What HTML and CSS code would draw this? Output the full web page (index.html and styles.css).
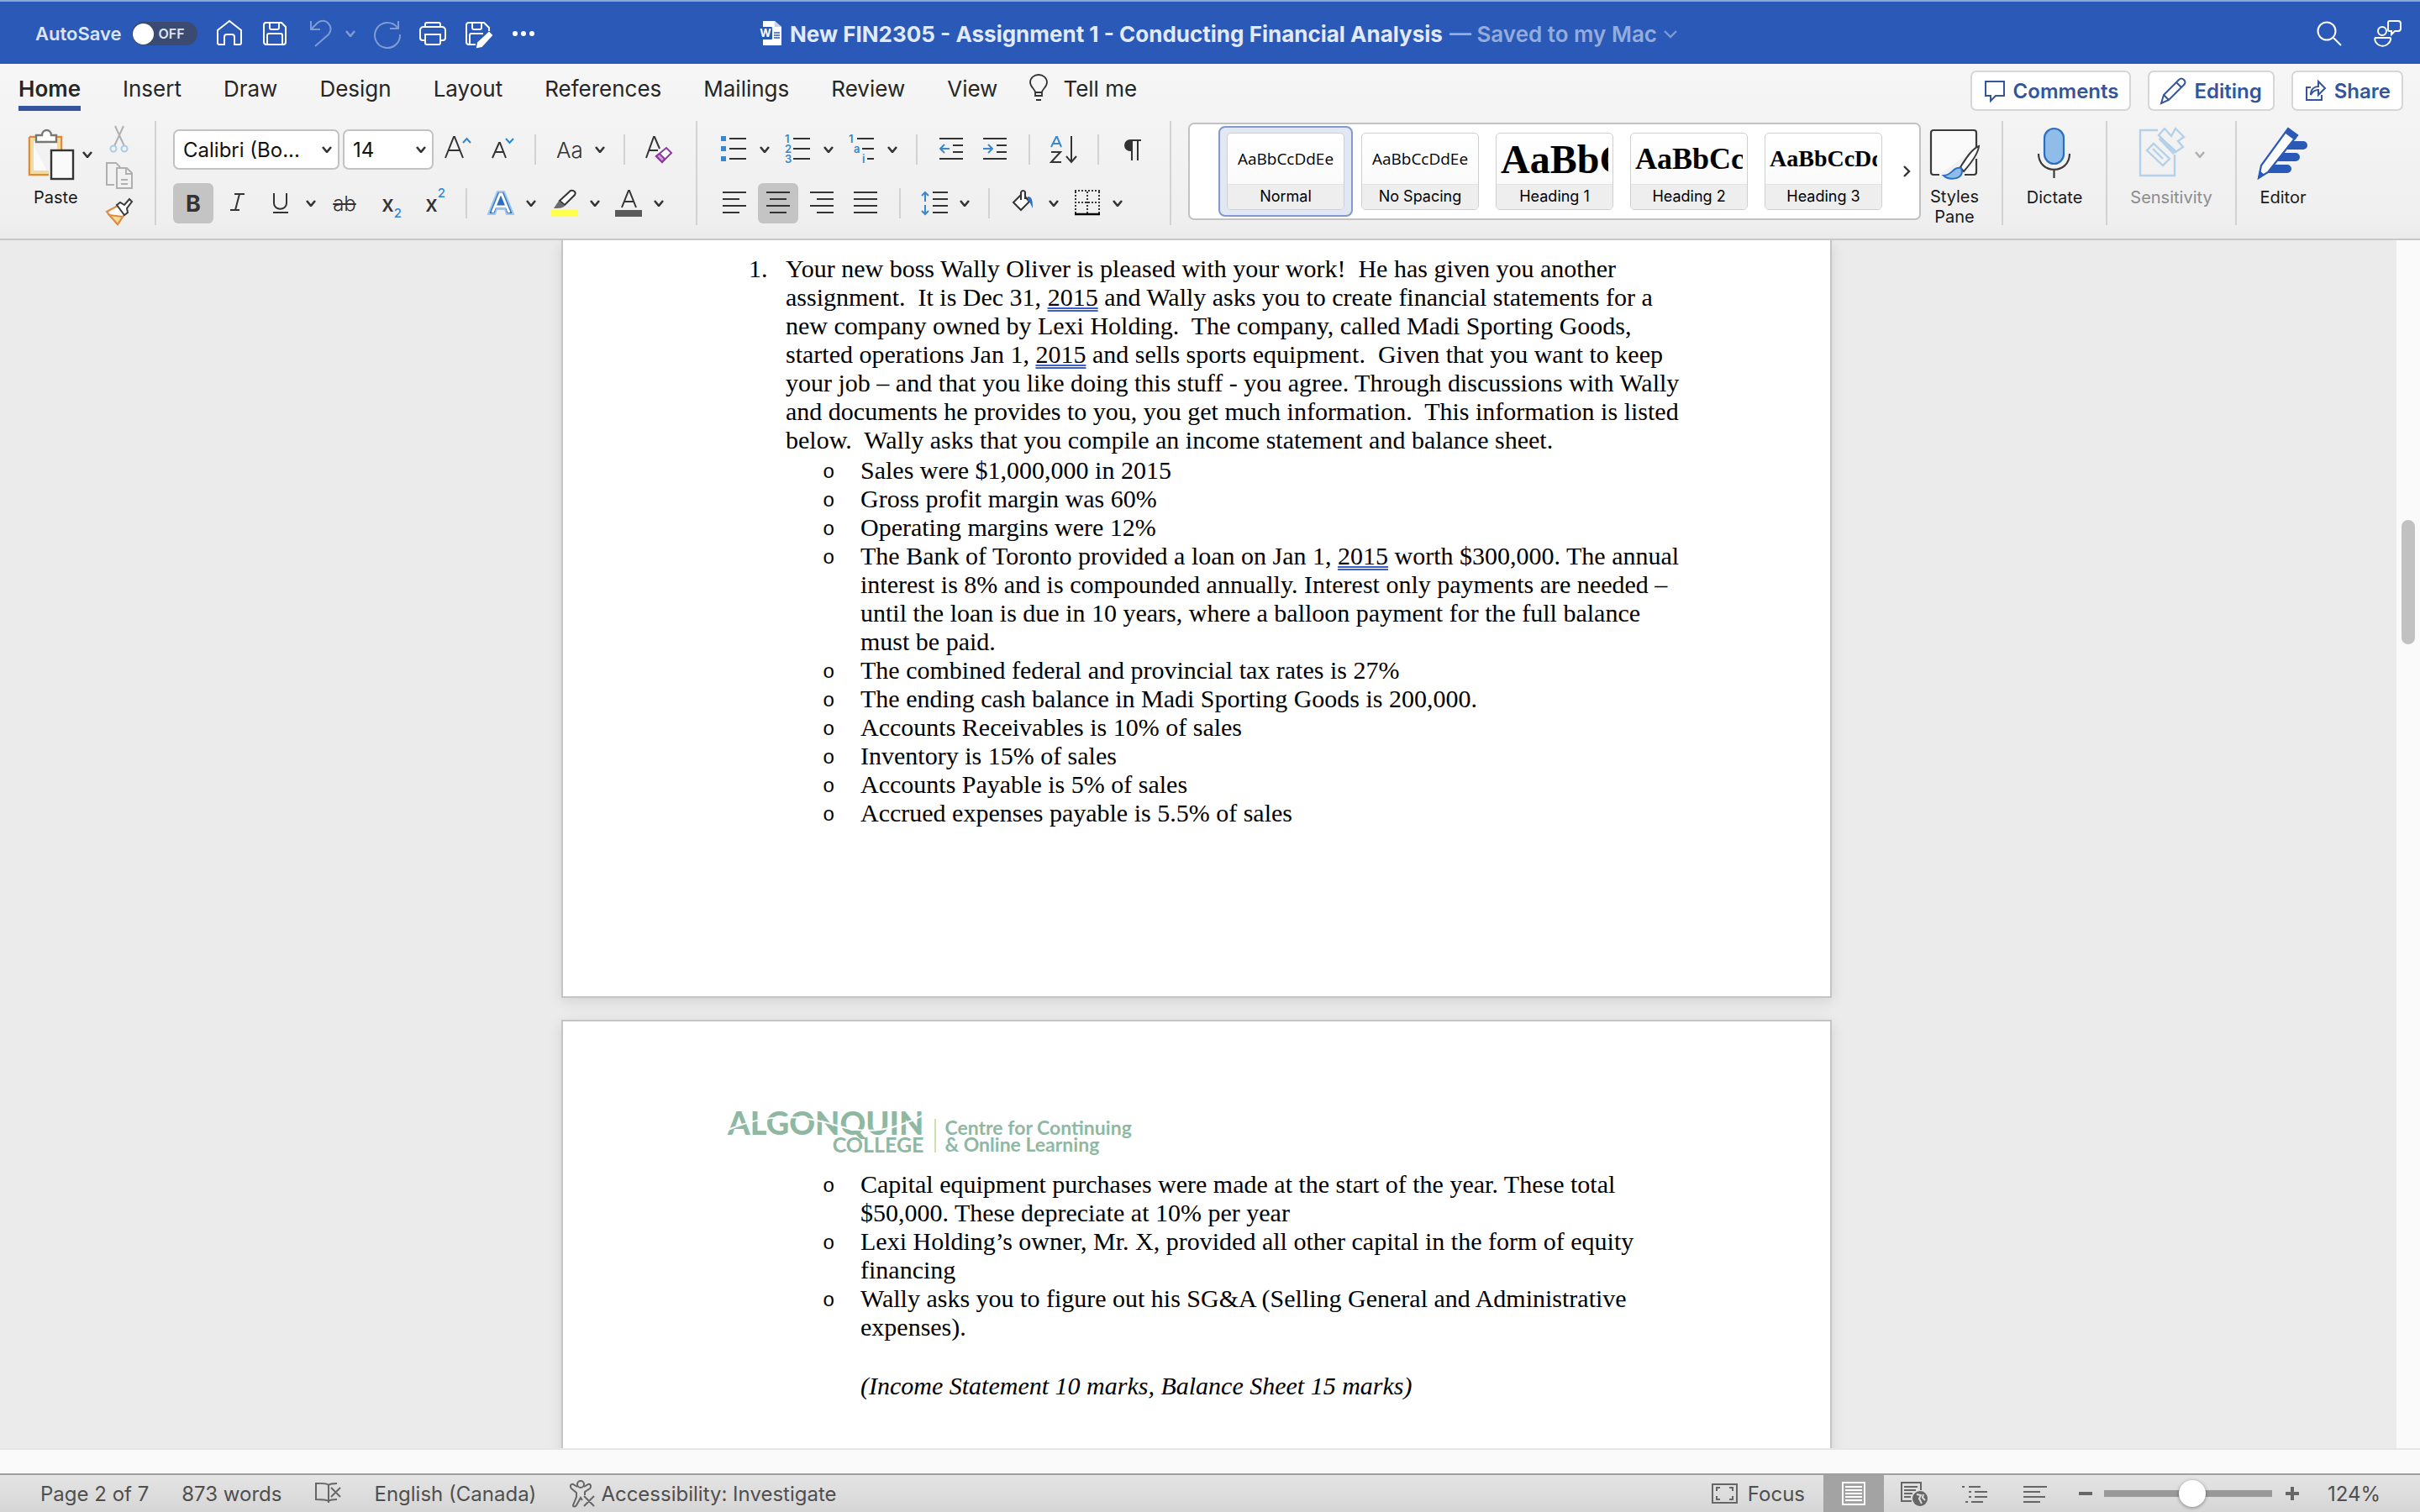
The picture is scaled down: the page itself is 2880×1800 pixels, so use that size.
FILE: index.html
```html
<!DOCTYPE html>
<html lang="en">
<head>
    <meta charset="UTF-8">
    <meta name="viewport" content="width=device-width, initial-scale=1.0">
    <title>New FIN2305 - Assignment 1 - Conducting Financial Analysis</title>
    <link rel="stylesheet" href="styles.css">
</head>
<body>

    <svg class="sprite" aria-hidden="true">
        <symbol id="chev" viewBox="0 0 12 8"><path d="M1 1l5 6 5-6" fill="none" stroke="currentColor" stroke-width="2.6"/></symbol>
    </svg>

    <!-- Title bar -->
    <header class="titlebar">
        <div class="quick">
            <label class="autosave">AutoSave
                <input type="checkbox" class="toggle-input">
                <span class="toggle"><span class="knob"></span>OFF</span>
            </label>
            <button class="qbtn" aria-label="Home"><svg class="ic" viewBox="0 0 32 32"><path d="M2 12L16 1l14 11v15a2 2 0 0 1-2 2h-6v-9a3 3 0 0 0-3-3h-6a3 3 0 0 0-3 3v9H4a2 2 0 0 1-2-2z"/></svg></button>
            <button class="qbtn" aria-label="Save"><svg class="ic" viewBox="0 0 32 32"><path d="M5 3h19l5 5v18a3 3 0 0 1-3 3H6a3 3 0 0 1-3-3V6a3 3 0 0 1 2-3zM10 3v6a2 2 0 0 0 2 2h7a2 2 0 0 0 2-2V3M7 29V18a2 2 0 0 1 2-2h14a2 2 0 0 1 2 2v11"/></svg></button>
            <span class="qpair dim">
                <button class="qbtn" aria-label="Undo"><svg class="ic" viewBox="0 0 32 32"><path d="M5 1v10h11M5 11l8-8c4-3 9-3 12 0 5 5 4 10 1 14L10 31"/></svg></button>
                <button class="qbtn" aria-label="Undo options"><svg class="chev" viewBox="0 0 12 8"><use href="#chev"/></svg></button>
            </span>
            <button class="qbtn dim" aria-label="Redo"><svg class="ic" viewBox="0 0 32 32"><path d="M29 1v9H19M28 9A15 15 0 1 0 31 17"/></svg></button>
            <button class="qbtn" aria-label="Print"><svg class="ic" viewBox="0 0 32 32"><path d="M7 8V5a2 2 0 0 1 2-2h14a2 2 0 0 1 2 2v3M7 24H4a3 3 0 0 1-3-3v-9a4 4 0 0 1 4-4h22a4 4 0 0 1 4 4v9a3 3 0 0 1-3 3h-3M7 17h18v10a2 2 0 0 1-2 2H9a2 2 0 0 1-2-2z"/></svg></button>
            <button class="qbtn" aria-label="Save as"><svg class="ic" viewBox="0 0 32 32"><path d="M13 29H5a3 3 0 0 1-3-3V6a3 3 0 0 1 3-3h18l6 6v4M9 3v6a2 2 0 0 0 2 2h7a2 2 0 0 0 2-2V3M6 29V18a2 2 0 0 1 2-2h14"/><path d="M29 15l3 3-12 13-5 1 1-5z" fill="currentColor"/></svg></button>
            <button class="qbtn" aria-label="More"><svg class="ic" viewBox="0 0 32 32"><g fill="currentColor" stroke="none"><circle cx="6" cy="16" r="3"/><circle cx="16" cy="16" r="3"/><circle cx="26" cy="16" r="3"/></g></svg></button>
        </div>
        <h1 class="doc-title">
            <svg class="doc-icon" viewBox="0 0 26 32"><path d="M4 1h14l8 7v22H4z" fill="#fff"/><path d="M18 1v7h8z" fill="#c9d3e6"/><path d="M17 15h7M17 18h7M17 21h7" stroke="#2b59b7" stroke-width="1.5"/><rect y="8" width="15" height="15" rx="1" fill="#2458b5"/><text x="7" y="20" text-anchor="middle" class="doc-icon-w">W</text></svg>
            <span>New FIN2305 - Assignment 1 - Conducting Financial Analysis</span>
            <span class="saved">— Saved to my Mac</span>
            <svg class="title-chev" viewBox="0 0 16 9"><path d="M1 1l7 7 7-7" fill="none" stroke="currentColor" stroke-width="2.4"/></svg>
        </h1>
        <div class="title-right">
            <button class="qbtn" aria-label="Search"><svg class="ic" viewBox="0 0 32 32"><circle cx="13" cy="13" r="10.5"/><path d="M21 21l9 9"/></svg></button>
            <button class="qbtn" aria-label="Share presence"><svg class="ic" viewBox="0 0 32 32"><circle cx="9" cy="13" r="5"/><path d="M1 21h17c2 0 1 4-1 6-4 5-11 5-15 0-2-2-2-6-1-6zM18 1h10a3 3 0 0 1 3 3v6a3 3 0 0 1-3 3h-4l-4 4v-4h-2a2 2 0 0 1-2-2V3a2 2 0 0 1 2-2z"/></svg></button>
        </div>
    </header>

    <!-- Ribbon -->
    <section class="ribbon">
        <div class="tabs-row">
            <nav class="tabs">
                <button class="tab active">Home</button>
                <button class="tab">Insert</button>
                <button class="tab">Draw</button>
                <button class="tab">Design</button>
                <button class="tab">Layout</button>
                <button class="tab">References</button>
                <button class="tab">Mailings</button>
                <button class="tab">Review</button>
                <button class="tab">View</button>
                <button class="tab tell"><svg class="bulb" viewBox="0 0 22 32"><path d="M7 21c0-4-6-6-6-12a10 9 0 0 1 20 0c0 6-6 8-6 12v4H7zM7 21h8M8 30h6" fill="none" stroke="#333" stroke-width="1.8"/></svg>Tell me</button>
            </nav>
            <div class="actions">
                <button class="action"><svg class="aic" viewBox="0 0 28 32"><path d="M3 5h22v17H15l-6 6v-6H3z"/></svg>Comments</button>
                <button class="action"><svg class="aic pencil" viewBox="0 0 32 32"><path d="M1 31l3-10L22 3c2-2 4-2 6 0s2 4 0 6L10 27zM4 21l6 6M19 6l6 6"/></svg>Editing</button>
                <button class="action"><svg class="aic" viewBox="0 0 28 32"><path d="M8 12H3v15h18v-6M8 21c0-7 4-10 9-10V5l8 8-8 8v-6c-5 0-7 2-9 6z"/></svg>Share</button>
            </div>
        </div>

        <div class="tools">
            <!-- Clipboard -->
            <div class="group clipboard">
                <button class="big paste">
                    <span class="pair"><svg class="bigic" viewBox="0 0 60 60"><path d="M5 9h38v15M28 54H5V9" fill="#fafafa" stroke="#e08a3e" stroke-width="2.5"/><path d="M8 12h32v12M28 51H8V12" fill="none" stroke="#f3dc9a" stroke-width="4"/><path d="M13 15V7h7c0-8 11-8 11 0h6v8z" fill="#fff" stroke="#797774" stroke-width="2.4"/><rect x="31" y="25" width="26" height="34" fill="#fafafa" stroke="#333" stroke-width="2.4"/></svg><svg class="chev" viewBox="0 0 12 8"><use href="#chev"/></svg></span>
                    <span class="biglabel">Paste</span>
                </button>
                <div class="mini">
                    <button class="minibtn" aria-label="Cut"><svg class="ic" viewBox="0 0 32 32"><path d="M11 0l11 24M21 0L10 24" stroke="#b0b0b0"/><circle cx="9" cy="27" r="3.5" stroke="#a9cbe8"/><circle cx="22" cy="27" r="3.5" stroke="#a9cbe8"/></svg></button>
                    <button class="minibtn" aria-label="Copy"><svg class="ic" viewBox="0 0 32 32"><path d="M10 27H1V1h11l5 5M13 7h12l6 6v18H13zM24 7v7h7M18 21h8M18 26h8" stroke="#b0b0b0"/></svg></button>
                    <button class="minibtn" aria-label="Format painter"><svg class="ic" viewBox="0 0 32 32"><path d="M1 16l13-7 9 9-9 13z" fill="#fff" stroke="#e08a3e"/><path d="M4 20l16 2-6 9z" fill="#f6dc96" stroke="#e08a3e"/><path d="M13 8l4-3 5 3 6-7 3 3-6 8 1 5-4 3z" fill="#fff" stroke="#3b3a39"/></svg></button>
                </div>
            </div>

            <!-- Font -->
            <div class="group">
                <div class="row">
                    <label class="combo font-name"><select aria-label="Font"><option>Calibri (Bo...</option></select><svg class="chev" viewBox="0 0 12 8"><use href="#chev"/></svg></label>
                    <label class="combo font-size"><select aria-label="Font size"><option>14</option></select><svg class="chev" viewBox="0 0 12 8"><use href="#chev"/></svg></label>
                    <button class="tool" aria-label="Grow font"><svg class="ic" viewBox="0 0 32 32"><path d="M2 26L12 1h1l10 25M6 17h13"/><path d="M23 8l4.5-5L32 8" stroke="#2f86d0"/></svg></button>
                    <button class="tool" aria-label="Shrink font"><svg class="ic" viewBox="0 0 32 32"><path d="M6 26l8-18h1l7 18M9 19h11"/><path d="M22 3l4.5 5L31 3" stroke="#2f86d0"/></svg></button>
                    <span class="sep"></span>
                    <button class="tool with-chev glyph-aa">Aa</button><button class="drop" aria-label="Case options"><svg class="chev" viewBox="0 0 12 8"><use href="#chev"/></svg></button>
                    <span class="sep"></span>
                    <button class="tool" aria-label="Clear formatting"><svg class="ic" viewBox="0 0 32 32"><path d="M1 26L10 1h1l6 14M5 17h10"/><path d="M13 24l12-10 6 6-11 11z" fill="#fff" stroke="#8c3a9c"/><path d="M13 24l4-3 6 6-3 4z" fill="#d59be0" stroke="#8c3a9c"/></svg></button>
                </div>
                <div class="row">
                    <button class="tool pressed glyph-b">B</button>
                    <button class="tool glyph-i" aria-label="Italic"><svg class="ic" viewBox="0 0 32 32"><path d="M13 5h12M8 24h11M19 5l-5 19"/></svg></button>
                    <button class="tool with-chev" aria-label="Underline"><svg class="ic" viewBox="0 0 32 32"><path d="M8 4v12c0 9 15 9 15 0V4M7 27h18"/></svg></button><button class="drop" aria-label="Underline options"><svg class="chev" viewBox="0 0 12 8"><use href="#chev"/></svg></button>
                    <button class="tool glyph-ab">ab</button>
                    <button class="tool glyph-x">x<sub>2</sub></button>
                    <button class="tool glyph-x">x<sup>2</sup></button>
                    <span class="sep"></span>
                    <button class="tool with-chev" aria-label="Text effects"><svg class="ic" viewBox="0 0 32 32"><path d="M1 29L12 2h8l11 27h-8l-2-6H11l-2 6z" fill="#2b6fc2" stroke="#9cc7ef"/><path d="M6 27L15 5h2l9 22M9 20h14" stroke="#fff" stroke-width="3"/></svg></button><button class="drop" aria-label="Effect options"><svg class="chev" viewBox="0 0 12 8"><use href="#chev"/></svg></button>
                    <button class="tool with-chev" aria-label="Highlight"><svg class="ic" viewBox="0 0 32 32"><path d="M0 24h32v8H0z" fill="#ffff4d" stroke="none"/><path d="M10 13L23 1c4-1 7 2 5 5L16 18z" fill="#fff"/><path d="M9 13l7 6c-2 3-8 3-13 3z" fill="#6b6b6b" stroke="none"/></svg></button><button class="drop" aria-label="Highlight options"><svg class="chev" viewBox="0 0 12 8"><use href="#chev"/></svg></button>
                    <button class="tool with-chev" aria-label="Font color"><svg class="ic" viewBox="0 0 32 32"><path d="M0 24h32v8H0z" fill="#5a5a5a" stroke="none"/><path d="M8 21L16 1h1l8 20M11 14h11"/></svg></button><button class="drop" aria-label="Color options"><svg class="chev" viewBox="0 0 12 8"><use href="#chev"/></svg></button>
                </div>
            </div>

            <!-- Paragraph -->
            <div class="group">
                <div class="row">
                    <button class="tool with-chev" aria-label="Bullets"><svg class="ic" viewBox="0 0 32 32"><path d="M0 0h6v6H0zM0 12h6v6H0zM0 24h6v6H0z" fill="#3a87cc" stroke="none"/><path d="M10 3h20M10 15h20M10 27h20"/></svg></button><button class="drop" aria-label="Bullet options"><svg class="chev" viewBox="0 0 12 8"><use href="#chev"/></svg></button>
                    <button class="tool with-chev" aria-label="Numbering"><svg class="ic num" viewBox="0 0 32 32"><text x="0" y="8">1</text><text x="0" y="20">2</text><text x="0" y="32">3</text><path d="M10 3h20M10 15h20M10 27h20"/></svg></button><button class="drop" aria-label="Numbering options"><svg class="chev" viewBox="0 0 12 8"><use href="#chev"/></svg></button>
                    <button class="tool with-chev" aria-label="Multilevel list"><svg class="ic num" viewBox="0 0 32 32"><text x="0" y="8">1</text><text x="6" y="20">a</text><text x="16" y="32">i</text><path d="M10 3h20M16 15h14M22 27h8"/></svg></button><button class="drop" aria-label="Multilevel options"><svg class="chev" viewBox="0 0 12 8"><use href="#chev"/></svg></button>
                    <span class="sep"></span>
                    <button class="tool" aria-label="Decrease indent"><svg class="ic" viewBox="0 0 32 32"><path d="M2 3h28M18 11h12M18 19h12M2 27h28"/><path d="M14 15H3M8 10l-5 5 5 5" stroke="#3a87cc"/></svg></button>
                    <button class="tool" aria-label="Increase indent"><svg class="ic" viewBox="0 0 32 32"><path d="M2 3h28M18 11h12M18 19h12M2 27h28"/><path d="M2 15h11M8 10l5 5-5 5" stroke="#3a87cc"/></svg></button>
                    <span class="sep"></span>
                    <button class="tool" aria-label="Sort"><svg class="ic" viewBox="0 0 32 32"><path d="M1 13L7 1h1l5 12M3 9h9" stroke="#3a87cc"/><path d="M1 19h11L1 31h12M25 0v30M19 24l6 7 6-7"/></svg></button>
                    <span class="sep"></span>
                    <button class="tool glyph-para" aria-label="Show marks"><svg class="ic" viewBox="0 0 32 32"><path d="M15 5h-2a6 6 0 0 0 0 12h2z" fill="#333"/><path d="M14 5h12M15 5v24M22 5v24"/></svg></button>
                </div>
                <div class="row">
                    <button class="tool" aria-label="Align left"><svg class="ic" viewBox="0 0 32 32"><path d="M2 3h28M2 11h20M2 19h28M2 27h20"/></svg></button>
                    <button class="tool pressed" aria-label="Center"><svg class="ic" viewBox="0 0 32 32"><path d="M2 3h28M6 11h20M2 19h28M6 27h20"/></svg></button>
                    <button class="tool" aria-label="Align right"><svg class="ic" viewBox="0 0 32 32"><path d="M2 3h28M10 11h20M2 19h28M10 27h20"/></svg></button>
                    <button class="tool" aria-label="Justify"><svg class="ic" viewBox="0 0 32 32"><path d="M2 3h28M2 11h28M2 19h28M2 27h28"/></svg></button>
                    <span class="sep"></span>
                    <button class="tool with-chev" aria-label="Line spacing"><svg class="ic" viewBox="0 0 32 32"><path d="M14 3h18M14 11h18M14 19h18M14 27h18"/><path d="M5 14V3M1 7l4-4 4 4M5 18v11M1 25l4 4 4-4" stroke="#3a87cc"/></svg></button><button class="drop" aria-label="Spacing options"><svg class="chev" viewBox="0 0 12 8"><use href="#chev"/></svg></button>
                    <span class="sep"></span>
                    <button class="tool with-chev" aria-label="Shading"><svg class="ic" viewBox="0 0 32 32"><path d="M13 6L4 15l9 9 10-10-5-6" fill="#fff"/><path d="M13 12V3c1-3 5-2 5 0v8"/><path d="M21 8c5 0 6 4 6 14-2-4-3-8-6-9z" fill="#2b6fc2" stroke="none"/></svg></button><button class="drop" aria-label="Shading options"><svg class="chev" viewBox="0 0 12 8"><use href="#chev"/></svg></button>
                    <button class="tool with-chev" aria-label="Borders"><svg class="ic" viewBox="0 0 32 32"><path d="M1 1h30M1 15h30M2 2v26M16 2v26M30 2v26" stroke-dasharray="2 2"/><path d="M1 29h30" stroke="#000" stroke-width="2.5"/></svg></button><button class="drop" aria-label="Border options"><svg class="chev" viewBox="0 0 12 8"><use href="#chev"/></svg></button>
                </div>
            </div>

            <!-- Styles gallery -->
            <div class="group styles-group">
                <div class="gallery">
                    <button class="style selected"><span class="card"><span class="sample body-sample">AaBbCcDdEe</span><span class="cap">Normal</span></span></button>
                    <button class="style"><span class="card"><span class="sample body-sample">AaBbCcDdEe</span><span class="cap">No Spacing</span></span></button>
                    <button class="style"><span class="card"><span class="sample h1-sample">AaBbCc</span><span class="cap">Heading 1</span></span></button>
                    <button class="style"><span class="card"><span class="sample h2-sample">AaBbCc</span><span class="cap">Heading 2</span></span></button>
                    <button class="style"><span class="card"><span class="sample h3-sample">AaBbCcDd</span><span class="cap">Heading 3</span></span></button>
                    <button class="more-styles" aria-label="More styles"><svg viewBox="0 0 10 14"><path d="M2 1l6 6-6 6" fill="none" stroke="#333" stroke-width="2.4"/></svg></button>
                </div>
                <button class="big pane">
                    <svg class="bigic" viewBox="0 0 60 60"><path d="M12 54H5a3 3 0 0 1-3-3V4a3 3 0 0 1 3-3h48a3 3 0 0 1 3 3v18M56 35v16a3 3 0 0 1-3 3H42" fill="#fafafa" stroke="#3b3a39" stroke-width="2.2"/><path d="M59 20c-8 3-15 14-22 25l4 5c8-9 17-20 18-30z" fill="#fff" stroke="#3b3a39" stroke-width="2"/><path d="M38 46c-10-2-11 9-21 9 5 5 20 6 22-4z" fill="#8fbce8" stroke="#2b6fc2" stroke-width="2"/></svg>
                    <span class="biglabel">Styles<br>Pane</span>
                </button>
            </div>
            <div class="group single dictate">
                <button class="big">
                    <svg class="bigic" viewBox="0 0 60 60"><rect x="18" y="-1" width="23" height="42" rx="11.5" fill="#8fbce8" stroke="#2b6fc2" stroke-width="2.2"/><path d="M11 29c0 25 37 25 37 0M29.5 47v11" fill="none" stroke="#3b3a39" stroke-width="2.2"/></svg>
                    <span class="biglabel">Dictate</span>
                </button>
            </div>
            <div class="group single sensitivity">
                <button class="big" disabled>
                    <span class="pair"><svg class="bigic" viewBox="0 0 60 60"><path d="M24 1H3v54h41V30" fill="none" stroke="#b4d1e9" stroke-width="2.4"/><path d="M19 17l19 18-8 8-19-18zM18 23l12 12" fill="#f2f2f2" stroke="#b4d1e9" stroke-width="2.4"/><path d="M32-1l8 9 5-9 10 10-7 5 6 7-9 6-20-20z" fill="#f2f2f2" stroke="#b4d1e9" stroke-width="2.4"/><path d="M27 8l20 18-5 4L25 12z" fill="#b4d1e9"/></svg><svg class="chev" viewBox="0 0 12 8"><use href="#chev"/></svg></span>
                    <span class="biglabel">Sensitivity</span>
                </button>
            </div>
            <div class="group single editor">
                <button class="big">
                    <svg class="bigic" viewBox="0 0 60 60"><path d="M34 14h20a5 5 0 0 1 0 10H28zM28 28h17a5 5 0 0 1 0 10H20zM18 42h17a5 5 0 0 1 0 10H11z" fill="#2b59b7"/><path d="M1 58l3-15L36-1l11 8L12 51z" fill="#fff" stroke="#2b59b7" stroke-width="2.2"/><path d="M36-2l12 9-4 6-11-8zM0 59l2-10 6 5z" fill="#2b59b7"/></svg>
                    <span class="biglabel">Editor</span>
                </button>
            </div>
        </div>
    </section>

    <!-- Document -->
    <main class="workspace">
        <div class="canvas">
            <article class="page page-first">
                <ol class="questions">
                    <li><span class="marker">1.</span>
                        <div class="item">
                            <p>Your new boss Wally Oliver is pleased with your work!&nbsp; He has given you another assignment.&nbsp; It is Dec 31, <span class="flag">2015</span> and Wally asks you to create financial statements for a new company owned by Lexi Holding.&nbsp; The company, called Madi Sporting Goods, started operations Jan 1, <span class="flag">2015</span> and sells sports equipment.&nbsp; Given that you want to keep your job – and that you like doing this stuff - you agree. Through discussions with Wally and documents he provides to you, you get much information.&nbsp; This information is listed below.&nbsp; Wally asks that you compile an income statement and balance sheet.</p>
                            <ul class="facts">
                                <li>Sales were $1,000,000 in 2015</li>
                                <li>Gross profit margin was 60%</li>
                                <li>Operating margins were 12%</li>
                                <li>The Bank of Toronto provided a loan on Jan 1, <span class="flag">2015</span> worth $300,000. The annual interest is 8% and is compounded annually. Interest only payments are needed – until the loan is due in 10 years, where a balloon payment for the full balance must be paid.</li>
                                <li>The combined federal and provincial tax rates is 27%</li>
                                <li>The ending cash balance in Madi Sporting Goods is 200,000.</li>
                                <li>Accounts Receivables is 10% of sales</li>
                                <li>Inventory is 15% of sales</li>
                                <li>Accounts Payable is 5% of sales</li>
                                <li>Accrued expenses payable is 5.5% of sales</li>
                            </ul>
                        </div>
                    </li>
                </ol>
            </article>

            <article class="page page-next">
                <div class="logo">
                    <div class="logo-name">
                        <span class="logo-big">ALGONQUIN</span>
                        <span class="logo-small">COLLEGE</span>
                        <svg class="logo-cut" viewBox="0 0 232 30"><path d="M0 25C50 4 90 8 130 20s70 4 102-12" fill="none" stroke="#fff" stroke-width="2"/></svg>
                    </div>
                    <div class="logo-dept">Centre for Continuing<br>&amp; Online Learning</div>
                </div>
                <div class="item next-item">
                    <ul class="facts">
                        <li>Capital equipment purchases were made at the start of the year. These total $50,000. These depreciate at 10% per year</li>
                        <li>Lexi Holding’s owner, Mr. X, provided all other capital in the form of equity financing</li>
                        <li>Wally asks you to figure out his SG&amp;A (Selling General and Administrative expenses).</li>
                    </ul>
                    <p class="marks">(Income Statement 10 marks, Balance Sheet 15 marks)</p>
                </div>
            </article>
        </div>
        <div class="scroll-v"><div class="thumb"></div></div>
    </main>
    <div class="scroll-h"></div>

    <!-- Status bar -->
    <footer class="status">
        <div class="status-left">
            <span class="st-page">Page 2 of 7</span>
            <span class="st-words">873 words</span>
            <svg class="ic st-book" viewBox="0 0 32 32"><path d="M17 5v22M17 6c-3-3-12-2-15-2v19c4 0 12 0 15 2 2-2 6-2 10-2M17 6c2-2 6-2 10-2M20 9l11 11M31 9L20 20"/></svg>
            <span class="st-lang">English (Canada)</span>
            <button class="st-access"><svg class="ic" viewBox="0 0 32 32"><circle cx="14" cy="5" r="4"/><path d="M10 8L5 5C2 4 1 8 3 10l6 5v5L5 30c0 2 3 2 4 0l5-9 2 3M18 8l5-3c3-1 4 3 2 5l-6 4v4M18 19l12 12M30 19L18 31"/></svg>Accessibility: Investigate</button>
        </div>
        <div class="status-right">
            <button class="st-focus"><svg class="ic" viewBox="0 0 32 32"><rect x="2" y="5" width="29" height="22"/><path d="M7 13V9h4M22 9h4v4M26 19v4h-4M11 23H7v-4"/></svg>Focus</button>
            <button class="view-btn on" aria-label="Print layout"><svg class="ic" viewBox="0 0 32 32"><rect x="3" y="3" width="26" height="26" stroke="#fff"/><path d="M6 8h20M6 12h20M6 16h20M6 20h20M6 24h20" stroke="#fff"/></svg></button>
            <button class="view-btn" aria-label="Web layout"><svg class="ic" viewBox="0 0 32 32"><path d="M13 25H1V3h23v9M4 8h16M4 12h14M4 16h10M4 20h8"/><circle cx="23" cy="22" r="9" fill="#666" stroke="none"/><path d="M19 17l5 1-2 4 3 6M27 17l-1 4 3 3" stroke="#ddd"/></svg></button>
            <button class="view-btn" aria-label="Outline"><svg class="ic" viewBox="0 0 32 32"><path d="M1 8h3M9 8h14M9 14h3M16 14h15M9 20h3M16 20h15M5 26h3M12 26h14"/></svg></button>
            <button class="view-btn" aria-label="Draft"><svg class="ic" viewBox="0 0 32 32"><path d="M2 8h28M2 14h20M2 20h26M2 26h20"/></svg></button>
            <button class="zoom-btn" aria-label="Zoom out"><svg viewBox="0 0 16 16"><path d="M0 8h16"/></svg></button>
            <input type="range" class="zoom" min="0" max="100" value="53" aria-label="Zoom">
            <button class="zoom-btn" aria-label="Zoom in"><svg viewBox="0 0 16 16"><path d="M0 8h16M8 0v16"/></svg></button>
            <span class="zoom-value">124%</span>
        </div>
    </footer>

</body>
</html>
```

FILE: styles.css
```css
* {
    box-sizing: border-box;
}

body {
    margin: 0;
    height: 100vh;
    display: flex;
    flex-direction: column;
    overflow: hidden;
    font-family: Inter, "Liberation Sans", sans-serif;
    color: #262626;
    background: #ebebeb;
}

button {
    font: inherit;
    color: inherit;
    background: none;
    border: 0;
    padding: 0;
    cursor: pointer;
}

svg {
    display: block;
    flex: none;
    overflow: visible;
}

.sprite {
    position: absolute;
    width: 0;
    height: 0;
}

.ic {
    width: 32px;
    height: 32px;
    fill: none;
    stroke: currentColor;
    stroke-width: 2;
}

.chev {
    width: 12px;
    height: 8px;
}

/* Title bar */
.titlebar {
    height: 76px;
    flex: none;
    display: grid;
    grid-template-columns: 1fr auto 1fr;
    align-items: center;
    padding: 2px 22px 0 42px;
    border-top: 2px solid #8ba6da;
    background: #2b59b7;
    color: #fff;
}

.quick {
    display: flex;
    align-items: center;
    gap: 22px;
}

.autosave {
    display: flex;
    align-items: center;
    gap: 12px;
    font-size: 22px;
    font-weight: 600;
    color: #dbe4f5;
}

.toggle-input {
    position: absolute;
    opacity: 0;
}

.toggle {
    width: 78px;
    height: 28px;
    display: flex;
    align-items: center;
    gap: 6px;
    padding-left: 1px;
    border-radius: 14px;
    background: #3a4a70;
    font-size: 16px;
}

.knob {
    width: 25px;
    height: 25px;
    border-radius: 50%;
    background: #fff;
}

.qpair {
    display: flex;
    align-items: center;
    gap: 14px;
}

.dim {
    color: #7f9bd3;
}

.doc-title {
    display: flex;
    align-items: center;
    margin: 0;
    font-size: 26px;
    font-weight: 700;
    color: #e3eaf7;
    white-space: nowrap;
}

.doc-icon {
    width: 26px;
    height: 32px;
    margin-right: 10px;
}

.doc-icon-w {
    font-size: 13px;
    font-weight: 700;
    fill: #fff;
}

.saved {
    margin-left: 8px;
    font-weight: 600;
    color: #95acdb;
}

.title-chev {
    width: 16px;
    height: 9px;
    margin-left: 8px;
    color: #7f9bd3;
}

.title-right {
    display: flex;
    justify-content: flex-end;
    gap: 38px;
}

/* Ribbon */
.ribbon {
    height: 210px;
    flex: none;
    background: linear-gradient(#f6f6f6, #efefef 90%, #ebebeb);
    border-bottom: 2px solid #c8c8c8;
}

.tabs-row {
    height: 68px;
    display: flex;
    justify-content: space-between;
    padding: 8px 20px 0 22px;
}

.tabs {
    display: flex;
    align-items: flex-start;
    gap: 50px;
}

.tab {
    height: 48px;
    display: flex;
    align-items: center;
    padding-bottom: 6px;
    font-size: 26px;
}

.tab.active {
    font-weight: 600;
    padding-bottom: 0;
    border-bottom: 6px solid #34549b;
}

.tell {
    gap: 18px;
    margin-left: -12px;
}

.bulb {
    width: 22px;
    height: 32px;
}

.actions {
    display: flex;
    gap: 20px;
}

.action {
    height: 48px;
    display: flex;
    align-items: center;
    gap: 8px;
    padding: 0 13px;
    border: 2px solid #d6d6d6;
    border-radius: 7px;
    background: #fff;
    font-size: 24px;
    font-weight: 600;
    color: #34549b;
}

.aic {
    width: 28px;
    height: 32px;
    fill: none;
    stroke: #34549b;
    stroke-width: 2;
}

.pencil {
    width: 32px;
}

.tools {
    height: 124px;
    display: flex;
    color: #333;
}

.group {
    padding: 10px 20px 0;
    border-right: 2px solid #d2d2d2;
}

.group:last-child {
    border-right: 0;
}

.clipboard {
    width: 186px;
    display: flex;
    padding: 6px 20px 0 30px;
}

.mini {
    display: flex;
    flex-direction: column;
    gap: 11px;
    margin-left: 16px;
}

.big {
    display: flex;
    flex-direction: column;
    align-items: center;
    gap: 8px;
    color: #1a1a1a;
}

.pair {
    display: flex;
    align-items: center;
    gap: 8px;
    color: #333;
}

.paste {
    padding-top: 4px;
    gap: 9px;
}

.paste .biglabel {
    align-self: flex-start;
    margin-left: 10px;
}

.bigic {
    width: 60px;
    height: 60px;
}

.biglabel {
    font-size: 20px;
    line-height: 24px;
    color: #1a1a1a;
}

.row {
    display: flex;
    align-items: center;
    gap: 4px;
    height: 48px;
}

.row + .row {
    margin-top: 16px;
}

.tool {
    width: 48px;
    height: 48px;
    display: flex;
    align-items: center;
    justify-content: center;
    border-radius: 6px;
}

.with-chev {
    margin-right: -4px;
}

.drop {
    width: 24px;
    height: 48px;
    display: flex;
    align-items: center;
    justify-content: center;
}

.pressed {
    background: #c4c4c4;
}

.sep {
    width: 26px;
    height: 36px;
    background: linear-gradient(#d2d2d2, #d2d2d2) center / 2px 100% no-repeat;
}

.combo {
    display: grid;
    align-items: center;
}

.combo select {
    grid-area: 1 / 1;
    width: 100%;
    height: 48px;
    padding: 0 30px 0 10px;
    appearance: none;
    border: 2px solid #c2c2c2;
    border-radius: 7px;
    background: #fff;
    font: 24px Inter, sans-serif;
    color: #111;
}

.combo .chev {
    grid-area: 1 / 1;
    justify-self: end;
    margin-right: 9px;
}

.font-name {
    width: 198px;
}

.font-size {
    width: 108px;
}

.glyph-aa {
    font-size: 26px;
    font-weight: 300;
}

.glyph-b {
    font-size: 27px;
    font-weight: 700;
}

.glyph-ab {
    font-size: 24px;
    font-weight: 300;
    text-decoration: line-through;
}

.glyph-x {
    font-size: 26px;
    font-weight: 500;
    padding-left: 8px;
}

.glyph-x sub,
.glyph-x sup {
    font-size: 15px;
    line-height: 16px;
    color: #2f86d0;
}

.glyph-x sub {
    align-self: flex-end;
    margin-bottom: 4px;
}

.glyph-x sup {
    align-self: flex-start;
    margin-top: 4px;
}

.num text {
    font-size: 13px;
    font-weight: 600;
    fill: #3a87cc;
    stroke: none;
}

/* Styles gallery */
.styles-group {
    display: flex;
    padding: 2px 0 0 20px;
    width: 990px;
}

.gallery {
    width: 872px;
    height: 116px;
    display: flex;
    align-items: center;
    padding-left: 34px;
    border: 2px solid #c2c2c2;
    border-radius: 7px;
    background: #fff;
}

.style {
    width: 160px;
    height: 108px;
    padding: 6px 8px;
    border: 2px solid transparent;
    border-radius: 8px;
}

.style.selected {
    border-color: #7f9acb;
    background: #e1e8f3;
}

.card {
    height: 92px;
    display: flex;
    flex-direction: column;
    border: 1px solid #cfcfcf;
    border-radius: 5px;
    background: linear-gradient(#fff, #f8f8f8);
    overflow: hidden;
    color: #000;
}

.sample {
    flex: 1;
    margin: 0 5px;
    display: flex;
    align-items: center;
    overflow: hidden;
    white-space: nowrap;
}

.body-sample {
    justify-content: center;
    font-family: "Open Sans", sans-serif;
    font-size: 19px;
}

.h1-sample,
.h2-sample,
.h3-sample {
    font-family: "Liberation Serif", serif;
    font-weight: 700;
}

.h1-sample {
    font-size: 48px;
}

.h2-sample {
    font-size: 36px;
}

.h3-sample {
    font-size: 28px;
}

.cap {
    height: 30px;
    border-top: 1px solid #e3e3e3;
    background: #eee;
    font-size: 18px;
    line-height: 28px;
    text-align: center;
}

.more-styles {
    margin-left: 14px;
}

.more-styles svg {
    width: 10px;
    height: 14px;
}

.pane {
    width: 80px;
    padding-top: 8px;
}

.single {
    padding: 8px 0 0;
    display: flex;
    justify-content: center;
    align-items: flex-start;
}

.single .big {
    padding-top: 2px;
    gap: 9px;
}

.dictate {
    width: 124px;
}

.sensitivity {
    width: 154px;
}

.sensitivity .pair,
.sensitivity .biglabel {
    color: #8c8c8c;
}

.sensitivity .chev {
    color: #b0b0b0;
}

.editor {
    width: 110px;
}

/* Document */
.workspace {
    flex: 1;
    min-height: 0;
    display: flex;
    background: #ebebeb;
}

.canvas {
    flex: 1;
    display: flex;
    flex-direction: column;
    align-items: center;
    gap: 26px;
    padding-right: 4px;
    overflow: hidden;
}

.page {
    width: 1512px;
    flex: none;
    border: 2px solid #c4c4c4;
    background: #fff;
    box-shadow: 0 4px 16px rgba(0, 0, 0, 0.1);
    font-family: "Liberation Serif", "Times New Roman", serif;
    font-size: 30px;
    line-height: 34px;
    color: #000;
}

.page-first {
    border-top: 0;
    padding: 17px 173px 201px 221px;
}

.page-next {
    padding: 104px 173px 200px 196px;
}

.questions,
.facts {
    margin: 0;
    padding: 0;
    list-style: none;
}

.questions > li {
    display: flex;
}

.marker {
    width: 44px;
    flex: none;
}

.item p {
    margin: 0;
}

.facts {
    padding-top: 2px;
}

.facts li {
    padding-left: 89px;
}

.facts li::before {
    content: "o";
    float: left;
    margin-left: -45px;
    font-family: "Liberation Mono", monospace;
    font-size: 24px;
    line-height: 40px;
    height: 34px;
}

.flag {
    text-decoration: underline double #3a5fd0 2px;
    text-underline-offset: 2px;
    text-decoration-skip-ink: none;
}

.logo {
    display: flex;
    align-items: flex-end;
    color: #8fb8a2;
    font-family: Lato, sans-serif;
    font-weight: 700;
}

.logo-name {
    position: relative;
    display: flex;
    flex-direction: column;
    align-items: flex-end;
    padding-right: 12px;
}

.logo-big {
    font-size: 38px;
    font-weight: 900;
    line-height: 32px;
}

.logo-small {
    font-size: 25px;
    line-height: 20px;
}

.logo-cut {
    position: absolute;
    top: 0;
    left: 0;
    width: 232px;
    height: 30px;
}

.logo-dept {
    padding-left: 11px;
    border-left: 2px solid #cfe0b0;
    font-size: 23px;
    line-height: 20px;
}

.next-item {
    margin: 19px 0 0 69px;
}

.marks {
    padding: 34px 0 0 89px;
    font-style: italic;
}

.item .marks {
    margin-top: 2px;
}

.scroll-v {
    width: 28px;
    padding-top: 333px;
    background: #fafafa;
}

.thumb {
    width: 16px;
    height: 148px;
    margin: 0 auto;
    border-radius: 8px;
    background: #c1c1c1;
}

.scroll-h {
    height: 30px;
    flex: none;
    border-top: 2px solid #e6e6e6;
    background: #fafafa;
}

/* Status bar */
.status {
    height: 46px;
    flex: none;
    display: flex;
    justify-content: space-between;
    border-top: 2px solid #9f9f9f;
    background: linear-gradient(#e4e4e4, #d6d6d6);
    font-size: 24px;
    color: #4f4f4f;
}

.status-left,
.status-right {
    display: flex;
    align-items: center;
}

.status-left {
    padding-left: 48px;
    gap: 39px;
}

.status .ic {
    color: #666;
}

.st-access,
.st-focus {
    display: flex;
    align-items: center;
    gap: 6px;
}

.st-focus {
    gap: 12px;
    margin-right: 22px;
}

.view-btn {
    width: 72px;
    height: 44px;
    display: flex;
    align-items: center;
    justify-content: center;
}

.view-btn.on {
    background: #a3a3a3;
}

.zoom-btn svg {
    width: 16px;
    height: 16px;
    fill: none;
    stroke: #666;
    stroke-width: 4;
}

.zoom-btn {
    margin: 0 14px 0 16px;
}

.zoom {
    width: 200px;
    height: 32px;
    margin: 0;
    appearance: none;
    background: linear-gradient(#999, #999) center / 100% 8px no-repeat;
}

.zoom::-webkit-slider-thumb {
    appearance: none;
    width: 32px;
    height: 32px;
    border-radius: 50%;
    background: #fff;
    box-shadow: 0 1px 4px rgba(0, 0, 0, 0.4);
}

.zoom-value {
    width: 130px;
    padding-left: 20px;
}
```
